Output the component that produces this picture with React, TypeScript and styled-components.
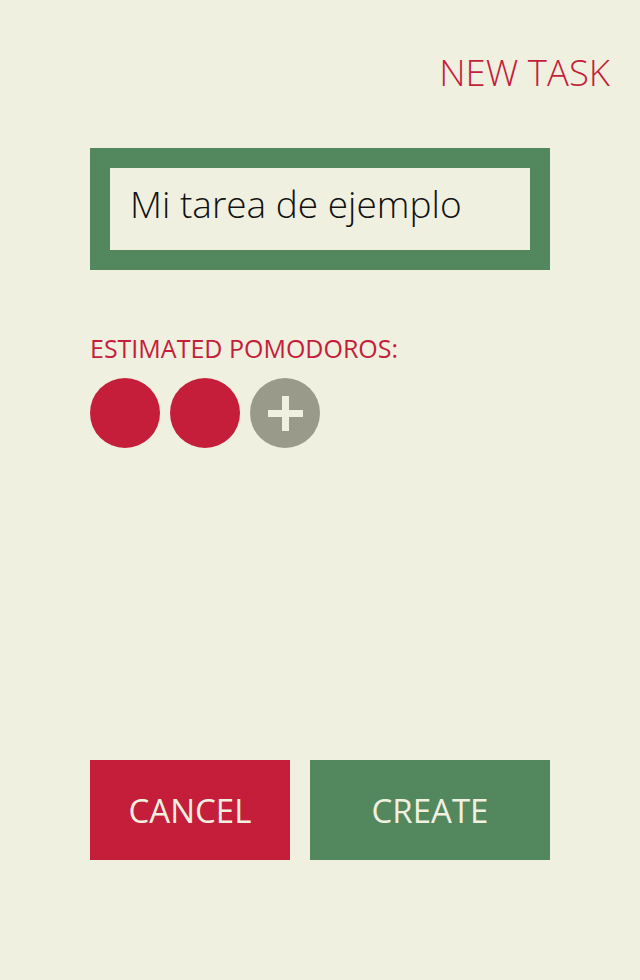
import React from "react";
import styled, { createGlobalStyle } from "styled-components";

const BG = "#f0f0e0";
const RED = "#c41e3a";
const GREEN = "#53875e";
const GRAY = "#9a9a8a";

const Global = createGlobalStyle`
  html, body { margin: 0; padding: 0; background: ${BG}; }
  body { font-family: "Open Sans", "Noto Sans", sans-serif; }
  * { box-sizing: border-box; }
`;

const Page = styled.div`
  width: 640px;
  min-height: 980px;
  background: ${BG};
  display: flex;
  flex-direction: column;
  padding: 47px 30px 0 90px;
`;

const Title = styled.h1`
  margin: 0;
  align-self: flex-end;
  font-size: 36.5px;
  font-weight: 300;
  color: ${RED};
  line-height: 50px;
`;

const Form = styled.div`
  width: 460px;
  display: flex;
  flex-direction: column;
`;

const InputFrame = styled.div`
  margin-top: 51px;
  border: 20px solid ${GREEN};
  height: 122px;
  display: flex;
`;

const TaskInput = styled.input`
  flex: 1;
  min-width: 0;
  width: 100%;
  border: none;
  outline: none;
  background: ${BG};
  padding: 0 20px 12px 20px;
  font-family: "Open Sans", sans-serif;
  font-weight: 300;
  font-size: 37px;
  color: #111;
`;

const Label = styled.div`
  margin-top: 62px;
  font-size: 25px;
  font-weight: 400;
  color: ${RED};
  line-height: 33px;
`;

const Dots = styled.div`
  margin-top: 13px;
  display: flex;
  gap: 10px;
`;

const Dot = styled.div<{ $add?: boolean }>`
  width: 70px;
  height: 70px;
  border-radius: 50%;
  background: ${(p) => (p.$add ? GRAY : RED)};
  display: flex;
  align-items: center;
  justify-content: center;
`;

const Plus = styled.span`
  position: relative;
  width: 35px;
  height: 35px;
  &::before, &::after {
    content: "";
    position: absolute;
    background: ${BG};
  }
  &::before { left: 0; right: 0; top: 14px; height: 7px; }
  &::after { top: 0; bottom: 0; left: 14px; width: 7px; }
`;

const Actions = styled.div`
  margin-top: 312px;
  display: flex;
  gap: 20px;
`;

const Button = styled.button<{ $variant: "cancel" | "create"; $w: number }>`
  width: ${(p) => p.$w}px;
  height: 100px;
  border: none;
  background: ${(p) => (p.$variant === "cancel" ? RED : GREEN)};
  color: ${BG};
  font-family: "Open Sans", sans-serif;
  font-size: 33px;
  font-weight: 400;
  padding: 0;
  cursor: pointer;
`;

export default function App() {
  return (
    <>
      <Global />
      <Page>
        <Title>NEW TASK</Title>
        <Form>
          <InputFrame>
            <TaskInput defaultValue="Mi tarea de ejemplo" />
          </InputFrame>
          <Label>ESTIMATED POMODOROS:</Label>
          <Dots>
            <Dot />
            <Dot />
            <Dot $add>
              <Plus />
            </Dot>
          </Dots>
          <Actions>
            <Button $variant="cancel" $w={200}>CANCEL</Button>
            <Button $variant="create" $w={240}>CREATE</Button>
          </Actions>
        </Form>
      </Page>
    </>
  );
}
